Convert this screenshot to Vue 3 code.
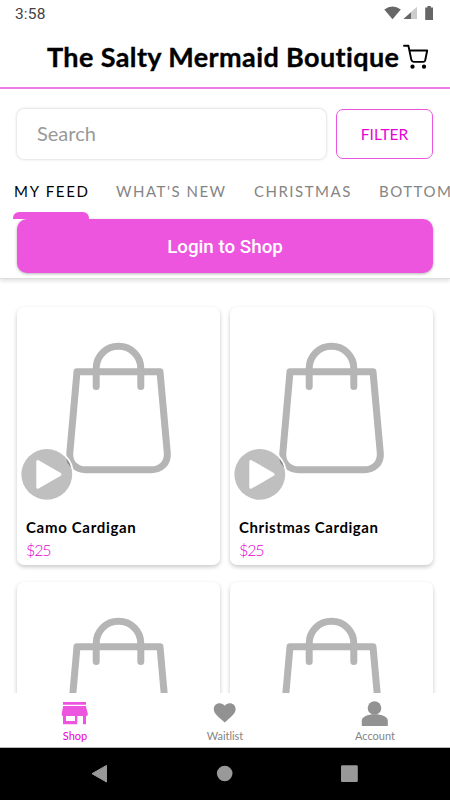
<script setup>
const tabs = [
  { label: 'MY FEED', cls: 'feed' },
  { label: "WHAT'S NEW", cls: 'new' },
  { label: 'CHRISTMAS', cls: 'christmas' },
  { label: 'BOTTOM', cls: 'bottoms' },
]
const products = [
  { id: 1, name: 'Camo Cardigan', price: '$25', cls: 'camo' },
  { id: 2, name: 'Christmas Cardigan', price: '$25', cls: 'xmas' },
  { id: 3, name: '', price: '', cls: '' },
  { id: 4, name: '', price: '', cls: '' },
]
</script>

<template>
  <div class="screen">
    <div class="status">
      <span class="time">3:58</span>
      <svg class="indicators" width="51" height="16" viewBox="0 0 51 16">
        <path d="M0.3 4.4Q8.5-1.6 16.8 4.4L8.5 14.2Z" fill="#666" />
        <path d="M33 1.8V14H19.5Z" fill="#ccc" />
        <path d="M27 7.2V14H19.5Z" fill="#666" />
        <path d="M43.4 1H46.8V2.5H49V15H41.2V2.5H43.4Z" fill="#666" />
      </svg>
    </div>
    <header class="header">
      <h1>The Salty Mermaid Boutique</h1>
      <svg class="cart" width="28" height="28" viewBox="0 0 28 28" fill="none" stroke="#000" stroke-width="1.9" stroke-linecap="round" stroke-linejoin="round">
        <path d="M2 2.7H6.4L9.4 17.1Q9.9 18.9 11.7 18.9H21.2Q22.8 18.9 23.2 17.3L25.2 7.5H7.4" />
        <circle cx="10.5" cy="23.7" r="1.2" fill="#000" />
        <circle cx="22" cy="23.7" r="1.2" fill="#000" />
      </svg>
    </header>
    <section class="controls">
      <div class="search-row">
        <div class="search"><span>Search</span></div>
        <button class="filter"><span>FILTER</span></button>
      </div>
      <nav class="tabs">
        <div v-for="(t, i) in tabs" :key="t.label" class="tab" :class="[t.cls, { active: i === 0 }]"><span>{{ t.label }}</span></div>
      </nav>
      <button class="login">Login to Shop</button>
    </section>
    <main class="products">
      <article v-for="p in products" :key="p.id" class="card">
        <svg class="picture" width="203" height="208" viewBox="0 0 203 208">
          <g fill="none" stroke="#b5b5b5" stroke-width="7" stroke-linecap="round" stroke-linejoin="round">
            <path d="M60 64.7H143L150.3 146C151.1 156 144 162.8 134 162.8H69C59 162.8 52 156 52.8 146Z" />
            <path d="M79.2 79.5V61.5C79.2 49 89 39.3 101.5 39.3S123.8 49 123.8 61.5V79.5" />
          </g>
          <circle cx="29.8" cy="167.4" r="27.2" fill="#fff" />
          <circle cx="29.8" cy="167.4" r="25.4" fill="#bfbfbf" />
          <path d="M49.4 151.4Q53 155.4 54.1 160.6L50.1 155.2Z" fill="#858585" />
          <path d="M20.8 154.5V180.3L43 167.4Z" fill="#fff" stroke="#fff" stroke-width="3" stroke-linejoin="round" />
        </svg>
        <div class="info">
          <div class="name" :class="p.cls">{{ p.name }}</div>
          <div class="price">{{ p.price }}</div>
        </div>
      </article>
    </main>
    <nav class="bottom-nav">
      <div class="nav-item shop">
        <svg width="28" height="28" viewBox="0 0 28 28">
          <path fill="#ee55df" fill-rule="evenodd" d="M2 3H25V5.7H2ZM2.2 7H24.8L26.7 14V16.8H25V25.2H22V17H16.3V25.2H2V16.8H.8V14ZM5 17V22H14V17Z" />
        </svg>
        <span>Shop</span>
      </div>
      <div class="nav-item">
        <svg width="28" height="28" viewBox="0 0 28 28">
          <path fill="#929292" d="M13.7 23.6L10.9 21C6.3 16.9 2.8 14 2.8 9.9C2.8 6.6 5.3 4.2 8.6 4.2C10.6 4.2 12.5 5.2 13.7 6.7C14.9 5.2 16.8 4.2 18.8 4.2C22.1 4.2 24.6 6.6 24.6 9.9C24.6 14 21.1 16.9 16.5 21Z" />
        </svg>
        <span class="wait">Waitlist</span>
      </div>
      <div class="nav-item">
        <svg width="28" height="28" viewBox="0 0 28 28">
          <g fill="#929292"><circle cx="13.5" cy="9" r="6.8" /><path d="M.8 27V21.5C.8 17.9 6.7 15.3 13.8 15.3S26.8 17.9 26.8 21.5V27Z" /></g>
        </svg>
        <span class="account">Account</span>
      </div>
    </nav>
    <footer class="system-nav">
      <svg width="20" height="20" viewBox="0 0 20 20"><path d="M2 9.7L16.5 1.4V18Z" fill="#999" stroke="#999" stroke-width="1" stroke-linejoin="round" /></svg>
      <svg width="20" height="20" viewBox="0 0 20 20"><circle cx="9.7" cy="9.5" r="7.8" fill="#999" /></svg>
      <svg width="20" height="20" viewBox="0 0 20 20"><rect x="1" y="1.2" width="16.8" height="16.8" rx="1.2" fill="#999" /></svg>
    </footer>
  </div>
</template>

<style>
body { margin: 0; overflow: hidden; }
</style>

<style scoped>
* { box-sizing: border-box; }
.screen {
  width: 450px;
  height: 800px;
  display: flex;
  flex-direction: column;
  overflow: hidden;
  background: #fff;
  font-family: Lato, "Liberation Sans", sans-serif;
  white-space: nowrap;
}
.status {
  flex: 0 0 28px;
  display: flex;
  justify-content: space-between;
  padding: 5px 15px 0 15px;
}
.time { font: 15.5px/19px Roboto, sans-serif; color: #424242; letter-spacing: .15px; }
.header {
  flex: 0 0 61px;
  display: flex;
  padding: 11px 0 0 47px;
  border-bottom: 2px solid #f17be5;
}
h1 {
  width: 355px;
  margin: 0;
  font-size: 27px;
  line-height: 36px;
  font-weight: 700;
  letter-spacing: .39px;
  -webkit-text-stroke: .35px #000;
  color: #000;
}
.cart { margin-top: 4px; }
.controls {
  position: relative;
  z-index: 1;
  flex: 0 0 190px;
  padding-top: 20px;
  background: #fff;
  border-bottom: 1px solid #dedede;
  box-shadow: 0 2px 4px rgba(0, 0, 0, .12);
}
.search-row { display: flex; gap: 10px; padding: 0 17px; }
.search {
  width: 309px;
  height: 50px;
  padding-left: 20px;
  border-radius: 7px;
  box-shadow: 0 0 3px rgba(0, 0, 0, .23);
  color: #999;
  font-size: 20px;
  line-height: 49px;
}
.filter {
  width: 97px;
  height: 50px;
  padding: 0;
  border: 1px solid #ee55df;
  border-radius: 7px;
  background: #fff;
  color: #e800d4;
  font: 15.5px/47px Lato, sans-serif;
}
.tabs {
  display: flex;
  gap: 26px;
  height: 59px;
  margin: 0 0 0 13px;
}
.tab {
  flex: none;
  height: 59px;
  padding-top: 19px;
  color: #858585;
  font-size: 15px;
  line-height: 26px;
  letter-spacing: 1.5px;
}
.tab span { padding-left: 1px; }
.tab.active { width: 76px; color: #000; letter-spacing: 1.7px; }
.tab.active::after {
  content: "";
  display: block;
  height: 7px;
  margin-top: 8px;
  border-radius: 6px 6px 0 0;
  background: #ee55df;
}
.new { width: 112px; }
.christmas { width: 99px; }
.login {
  display: block;
  width: 416px;
  height: 54px;
  margin: 1px 17px 0;
  padding: 0;
  border: 0;
  border-radius: 10px;
  background: #ee55df;
  box-shadow: 0 1px 3px rgba(0, 0, 0, .3);
  color: #fff;
  font: 500 18.8px/56px Roboto, sans-serif;
}
.products {
  flex: 0 0 414px;
  display: grid;
  grid-template-columns: 203px 203px;
  grid-auto-rows: 258px;
  gap: 17px 10px;
  align-content: start;
  padding: 28px 17px 0;
  overflow: hidden;
}
.card {
  border-radius: 7px;
  background: #fff;
  box-shadow: 0 2px 4px rgba(0, 0, 0, .22);
}
.picture { display: block; }
.info { padding: 0 9px; }
.name { height: 24px; font-size: 15px; font-weight: 700; line-height: 24px; letter-spacing: .68px; color: #000; }
.name.xmas { letter-spacing: .55px; }
.price { font-size: 16px; font-weight: 300; line-height: 22px; letter-spacing: -1.1px; color: #e800d4; }
.bottom-nav {
  flex: 0 0 55px;
  display: grid;
  grid-template-columns: repeat(3, 150px);
  padding-top: 6px;
  background: #fff;
  border-bottom: 1px solid #b8b8b8;
}
.nav-item { display: flex; flex-direction: column; align-items: center; color: #858585; font-size: 11px; line-height: 15px; }
.nav-item svg { flex: 0 0 28px; }
.nav-item span { margin-top: 1px; }
.wait, .account { letter-spacing: -.02px; }
.shop { color: #e800d4; }
.system-nav {
  flex: 0 0 52px;
  display: flex;
  justify-content: center;
  gap: 105px;
  padding-top: 16px;
  background: #000;
}
</style>
